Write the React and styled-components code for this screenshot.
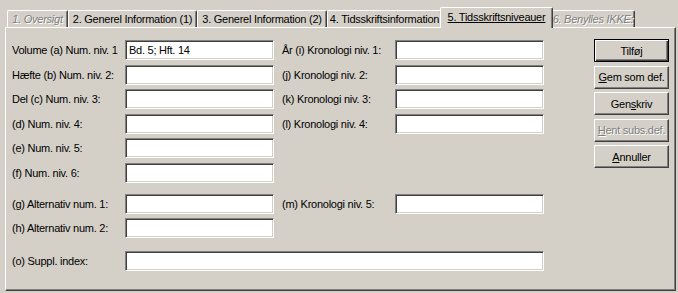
import React from 'react';
import styled, { createGlobalStyle, css } from 'styled-components';

const Global = createGlobalStyle`
  html, body { margin: 0; padding: 0; background: #d4d0c8; }
  body {
    font-family: "Liberation Sans", Arial, sans-serif;
    font-size: 11px;
    letter-spacing: -0.25px;
    color: #000;
  }
`;

const Window = styled.div`
  width: 678px;
  height: 293px;
  box-sizing: border-box;
  padding: 7px 2px 2px 5px;
  display: flex;
  flex-direction: column;
`;

const TabStrip = styled.div`
  display: flex;
  align-items: flex-end;
  height: 20px;
  padding-left: 2px;
  position: relative;
  z-index: 1;
`;

const disabledText = css`
  color: #808080;
  text-shadow: 1px 1px 0 #fff;
`;

const Tab = styled.div`
  box-sizing: border-box;
  width: ${(p) => p.$w}px;
  height: ${(p) => (p.$active ? 21 : 17)}px;
  margin: 0 ${(p) => (p.$active ? -2 : 0)}px ${(p) => (p.$active ? -1 : 0)}px;
  background: #d4d0c8;
  border-top: 1px solid #fff;
  border-left: 1px solid #fff;
  border-right: 1px solid #404040;
  border-radius: 2px 2px 0 0;
  box-shadow: inset -1px 0 #808080;
  display: flex;
  align-items: center;
  justify-content: center;
  padding-bottom: ${(p) => (p.$active ? 3 : 0)}px;
  white-space: nowrap;
  ${(p) => p.$disabled && css`${disabledText}; font-style: italic;`}
  ${(p) => p.$active && css`text-decoration: underline; position: relative; z-index: 2;`}
`;

const Panel = styled.div`
  flex: 1;
  box-sizing: border-box;
  border-top: 1px solid #fff;
  border-left: 1px solid #fff;
  border-right: 1px solid #404040;
  border-bottom: 1px solid #404040;
  box-shadow: inset -1px -1px #808080;
  display: flex;
  padding: 11px 6px 0 6px;
`;

const Form = styled.div`
  display: flex;
  flex-direction: column;
  padding-top: 1px;
`;

const Group = styled.div`
  display: grid;
  grid-template-columns: 105px 149px 105px 149px;
  grid-auto-rows: 20px;
  column-gap: 8px;
  row-gap: ${(p) => p.$gap}px;
  margin-top: ${(p) => p.$top || 0}px;
`;

const Label = styled.label`
  display: flex;
  align-items: center;
  white-space: nowrap;
  grid-column: ${(p) => p.$col};
  grid-row: ${(p) => p.$row};
`;

const Input = styled.input`
  box-sizing: border-box;
  height: 20px;
  width: 100%;
  margin: 0;
  padding: 0 3px;
  font: inherit;
  letter-spacing: inherit;
  color: #000;
  background: #fff;
  border: 1px solid;
  border-color: #808080 #fff #fff #808080;
  box-shadow: inset 1px 1px #404040, inset -1px -1px #d4d0c8;
  outline: none;
  grid-column: ${(p) => p.$col};
  grid-row: ${(p) => p.$row};
`;

const Buttons = styled.div`
  margin-left: auto;
  display: flex;
  flex-direction: column;
  gap: 3.5px;
`;

const Button = styled.button`
  box-sizing: border-box;
  width: 75px;
  height: 23px;
  margin: 0;
  padding: 0;
  font: inherit;
  letter-spacing: inherit;
  color: #000;
  background: #d4d0c8;
  border: 1px solid;
  border-color: #fff #404040 #404040 #fff;
  box-shadow: inset -1px -1px #808080;
  white-space: nowrap;
  ${(p) =>
    p.$default &&
    css`
      border-color: #000;
      box-shadow: inset 1px 1px #fff, inset -1px -1px #404040, inset -2px -2px #808080;
    `}
  ${(p) => p.disabled && disabledText}
`;

const tabs = [
  { label: '1. Oversigt', w: 61, disabled: true },
  { label: '2. Generel Information (1)', w: 129 },
  { label: '3. Generel Information (2)', w: 130 },
  { label: '4. Tidsskriftsinformation', w: 115 },
  { label: '5. Tidsskriftsniveauer', w: 113, active: true },
  { label: '6. Benylles IKKE:', w: 84, disabled: true },
];

const leftRows = [
  ['Volume (a) Num. niv. 1', 'Bd. 5; Hft. 14'],
  ['Hæfte (b) Num. niv. 2:', ''],
  ['Del (c) Num. niv. 3:', ''],
  ['(d) Num. niv. 4:', ''],
  ['(e) Num. niv. 5:', ''],
  ['(f) Num. niv. 6:', ''],
];

const rightRows = [
  'År (i) Kronologi niv. 1:',
  '(j) Kronologi niv. 2:',
  '(k) Kronologi niv. 3:',
  '(l) Kronologi niv. 4:',
];

export default function App() {
  return (
    <>
      <Global />
      <Window>
        <TabStrip>
          {tabs.map((t) => (
            <Tab key={t.label} $w={t.w} $active={t.active} $disabled={t.disabled}>
              {t.label}
            </Tab>
          ))}
        </TabStrip>
        <Panel>
          <Form>
            <Group $gap={4.6}>
              {leftRows.map(([l, v], i) => (
                <React.Fragment key={l}>
                  <Label $col={1} $row={i + 1}>{l}</Label>
                  <Input $col={2} $row={i + 1} defaultValue={v} />
                </React.Fragment>
              ))}
              {rightRows.map((l, i) => (
                <React.Fragment key={l}>
                  <Label $col={3} $row={i + 1}>{l}</Label>
                  <Input $col={4} $row={i + 1} />
                </React.Fragment>
              ))}
            </Group>
            <Group $gap={4} $top={11}>
              <Label $col={1} $row={1}>(g) Alternativ num. 1:</Label>
              <Input $col={2} $row={1} />
              <Label $col={3} $row={1}>(m) Kronologi niv. 5:</Label>
              <Input $col={4} $row={1} />
              <Label $col={1} $row={2}>(h) Alternativ num. 2:</Label>
              <Input $col={2} $row={2} />
            </Group>
            <Group $gap={4} $top={13}>
              <Label $col={1} $row={1}>(o) Suppl. index:</Label>
              <Input $col="2 / 5" $row={1} />
            </Group>
          </Form>
          <Buttons>
            <Button $default>Tilfø<u>j</u></Button>
            <Button><u>G</u>em som def.</Button>
            <Button>Gen<u>s</u>kriv</Button>
            <Button disabled><u>H</u>ent subs.def.</Button>
            <Button><u>A</u>nnuller</Button>
          </Buttons>
        </Panel>
      </Window>
    </>
  );
}
